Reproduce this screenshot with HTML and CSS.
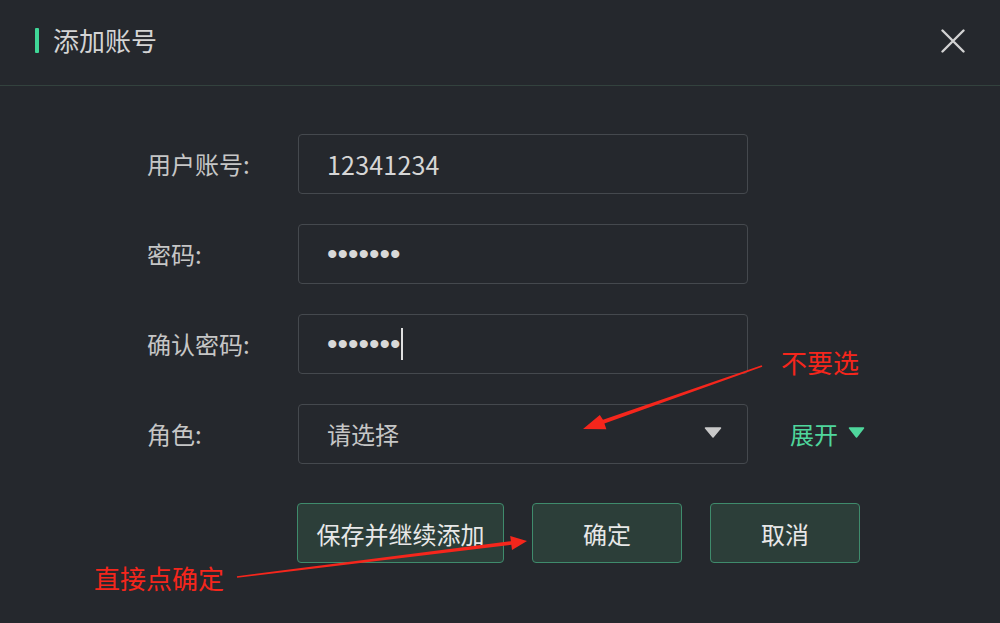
FILE: index.html
```html
<!DOCTYPE html>
<html lang="zh-CN">
<head>
<meta charset="utf-8">
<title>添加账号</title>
<link rel="stylesheet" href="styles.css">
</head>
<body>
<div class="dialog">
  <header class="dlg-head">
    <span class="head-bar"></span>
    <h1 class="dlg-title">添加账号</h1>
    <span class="close" aria-label="关闭">
      <svg viewBox="0 0 24 24" width="24" height="24"><path d="M1.5 1.5 L22.5 22.5 M22.5 1.5 L1.5 22.5" stroke="#d2d2d2" stroke-width="2.4" stroke-linecap="round" fill="none"/></svg>
    </span>
  </header>

  <form class="form">
    <div class="row">
      <label class="lbl">用户账号:</label>
      <div class="field"><span class="val">12341234</span></div>
    </div>
    <div class="row">
      <label class="lbl">密码:</label>
      <div class="field"><span class="dots">•••••••</span></div>
    </div>
    <div class="row">
      <label class="lbl">确认密码:</label>
      <div class="field"><span class="dots">•••••••</span><span class="caret"></span></div>
    </div>
    <div class="row">
      <label class="lbl">角色:</label>
      <div class="field select">
        <span class="placeholder">请选择</span>
        <svg class="sel-arrow" viewBox="0 0 18 11" width="18" height="11"><path d="M1.5 1 L16.5 1 L9 10 Z" fill="#c9c9c9" stroke="#c9c9c9" stroke-width="1.5" stroke-linejoin="round"/></svg>
      </div>
      <span class="expand">展开
        <svg viewBox="0 0 17 11" width="17" height="11"><path d="M1.5 1 L15.5 1 L8.5 10 Z" fill="#4fd69c" stroke="#4fd69c" stroke-width="1.5" stroke-linejoin="round"/></svg>
      </span>
    </div>
    <div class="actions">
      <button type="button" class="btn btn-wide">保存并继续添加</button>
      <button type="button" class="btn">确定</button>
      <button type="button" class="btn">取消</button>
    </div>
  </form>
</div>

<span class="note note-a">不要选</span>
<span class="note note-b">直接点确定</span>
<svg class="arrows" viewBox="0 0 1000 623" width="1000" height="623">
  <polygon fill="#f5261c" points="762.3,366.8 604.4,423.6 606.4,429.2 583,429 599.8,415.1 603,419.8 761.7,365.2"/>
  <polygon fill="#f5261c" points="237.1,577.7 511.3,544.8 512,549.9 527,541 510.2,536.1 510.9,541.2 236.9,576.3"/>
</svg>
</body>
</html>
```

FILE: styles.css
```css
* { box-sizing: border-box; }

html, body {
  margin: 0;
  padding: 0;
  background: #25282d;
  width: 1000px;
  height: 623px;
  overflow: hidden;
  font-family: "Noto Sans CJK SC", "Noto Sans", sans-serif;
}

.dialog {
  width: 1000px;
  height: 623px;
}

.dlg-head {
  box-sizing: content-box;
  height: 80px;
  padding: 0 35px 5px 35px;
  border-bottom: 1px solid #33423e;
  display: flex;
  align-items: center;
}

.head-bar {
  width: 4px;
  height: 25px;
  background: #3fd797;
  border-radius: 1px;
  margin-right: 14px;
}

.dlg-title {
  margin: 0;
  font-size: 26px;
  font-weight: 400;
  color: #d4d4d4;
  line-height: 1;
  flex: 1;
}

.close {
  display: flex;
  width: 24px;
  height: 24px;
  margin-top: 2px;
}

.form {
  padding: 48px 0 0 147px;
  display: flex;
  flex-direction: column;
  gap: 30px;
}

.row {
  display: flex;
  align-items: center;
  height: 60px;
}

.lbl {
  width: 151px;
  font-size: 24px;
  color: #c6c6c6;
  line-height: 1;
}

.field {
  width: 450px;
  height: 60px;
  border: 1px solid #45494e;
  border-radius: 4px;
  background: #25282d;
  display: flex;
  align-items: center;
  padding: 0 0 0 28px;
  color: #d6d6d6;
  font-size: 25px;
}

.val {
  line-height: 1;
  letter-spacing: 0.2px;
}

.dots {
  font-family: "Liberation Sans", sans-serif;
  font-size: 30px;
  line-height: 1;
  color: #d8d8d8;
}

.caret {
  width: 2px;
  height: 32px;
  background: #e0e0e0;
  margin-left: 0;
}

.select {
  justify-content: space-between;
  padding-right: 25px;
}

.placeholder {
  color: #c6c6c6;
  font-size: 24px;
  line-height: 1;
}

.sel-arrow { display: block; margin-top: -4px; }

.expand {
  margin-left: 42px;
  color: #4fd69c;
  font-size: 24px;
  line-height: 1;
  display: flex;
  align-items: center;
  gap: 10px;
}

.expand svg { margin-top: -4px; }

.actions {
  display: flex;
  gap: 28px;
  padding-left: 150px;
  margin-top: 9px;
}

.btn {
  width: 150px;
  height: 60px;
  background: #2c3e39;
  border: 1.5px solid #3f8b6c;
  border-radius: 4px;
  color: #e8e8e8;
  font-family: "Noto Sans CJK SC", "Noto Sans", sans-serif;
  font-size: 24px;
  padding: 0;
}

.btn-wide { width: 207px; }

.note {
  position: absolute;
  color: #f5261c;
  font-size: 26px;
  line-height: 1;
}

.note-a { left: 781px; top: 349px; }
.note-b { left: 94px; top: 565px; }

.arrows {
  position: absolute;
  left: 0;
  top: 0;
  pointer-events: none;
}
```
